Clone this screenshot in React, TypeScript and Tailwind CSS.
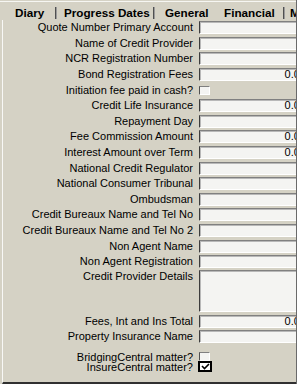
import React from "react";

const Field = ({ value, h = "h-[13px]" }: { value?: string; h?: string }) => (
  <div
    className={`${h} w-[111px] bg-[#f4f4f2] border border-t-[#808080] border-l-[#3c3c3c] border-b-[#ffffff] border-r-[#ffffff] shadow-[inset_1px_1px_0_#b8b8b8] flex items-center justify-end pr-[3px] text-[11px] leading-none overflow-hidden`}
  >
    {value}
  </div>
);

const Check = ({ checked = false }: { checked?: boolean }) =>
  checked ? (
    <div className="w-[14px] h-[11px] -ml-[1px] border-2 border-black bg-white flex items-center justify-center">
      <svg width="9" height="7" viewBox="0 0 9 7">
        <polyline points="1,3 3.5,5.5 8,1" fill="none" stroke="#000" strokeWidth="1.6" />
      </svg>
    </div>
  ) : (
    <div className="w-[11px] h-[9px] bg-[#f4f4f2] border border-t-[#808080] border-l-[#505050] border-b-white border-r-white" />
  );

const Row = ({
  label,
  children,
  h = "h-[15.6px]",
  top = false,
  lead = "leading-[13px]",
}: {
  label: string;
  children?: React.ReactNode;
  h?: string;
  top?: boolean;
  lead?: string;
}) => (
  <div className={`flex ${top ? "items-start" : "items-center"} ${h}`}>
    <div className={`w-[193px] shrink-0 text-right pr-[3px] whitespace-nowrap ${lead}`}>
      {label}
    </div>
    <div className="ml-[3px] shrink-0">{children}</div>
  </div>
);

const Sep = () => <div className="w-[2px] h-[12px] bg-[#505050] border-r border-r-[#9a9a9a] shrink-0" />;

export default function App() {
  return (
    <div
      className="w-[297px] h-[384px] overflow-hidden bg-[#d5d2c5] flex flex-col text-black text-[11px] border-r border-r-[#6a6a6a]"
      style={{ fontFamily: '"Liberation Sans", Arial, sans-serif' }}
    >
      <div className="h-[20px] shrink-0 pt-[1px]">
        <div className="h-[19px] border-t border-t-[#f6f6f2] flex items-center font-bold text-[11.7px] leading-none whitespace-nowrap pt-[4px]">
          <div className="w-[55px] pl-[15px] shrink-0">Diary</div>
          <Sep />
          <div className="w-[96px] pl-[7px] shrink-0">Progress Dates</div>
          <Sep />
          <div className="w-[61px] pl-[10px] shrink-0">General</div>
          <div className="w-[67px] pl-[8px] shrink-0">Financial</div>
          <Sep />
          <div className="pl-[5px] shrink-0">M</div>
        </div>
      </div>
      <div className="flex-1 ml-[2px] border-l border-l-[#f8f8f6] border-b-2 border-b-[#303030] flex flex-col overflow-hidden">
        <Row label="Quote Number Primary Account"><Field /></Row>
        <Row label="Name of Credit Provider"><Field /></Row>
        <Row label="NCR Registration Number"><Field /></Row>
        <Row label="Bond Registration Fees"><Field value="0.00" /></Row>
        <Row label="Initiation fee paid in cash?"><Check /></Row>
        <Row label="Credit Life Insurance"><Field value="0.00" /></Row>
        <Row label="Repayment Day"><Field /></Row>
        <Row label="Fee Commission Amount"><Field value="0.00" /></Row>
        <Row label="Interest Amount over Term"><Field value="0.00" /></Row>
        <Row label="National Credit Regulator"><Field /></Row>
        <Row label="National Consumer Tribunal"><Field /></Row>
        <Row label="Ombudsman"><Field /></Row>
        <Row label="Credit Bureaux Name and Tel No"><Field /></Row>
        <Row label="Credit Bureaux Name and Tel No 2"><Field /></Row>
        <Row label="Non Agent Name"><Field /></Row>
        <Row label="Non Agent Registration"><Field /></Row>
        <Row label="Credit Provider Details" h="h-[44px]" top>
          <Field h="h-[42px]" />
        </Row>
        <Row label="Fees, Int and Ins Total"><Field value="0.00" /></Row>
        <Row label="Property Insurance Name"><Field /></Row>
        <div className="h-[7px] shrink-0" />
        <Row label="BridgingCentral matter?" h="h-[10px]" lead="leading-[10px]"><Check /></Row>
        <Row label="InsureCentral matter?" h="h-[10px]" lead="leading-[10px]"><Check checked /></Row>
      </div>
    </div>
  );
}
